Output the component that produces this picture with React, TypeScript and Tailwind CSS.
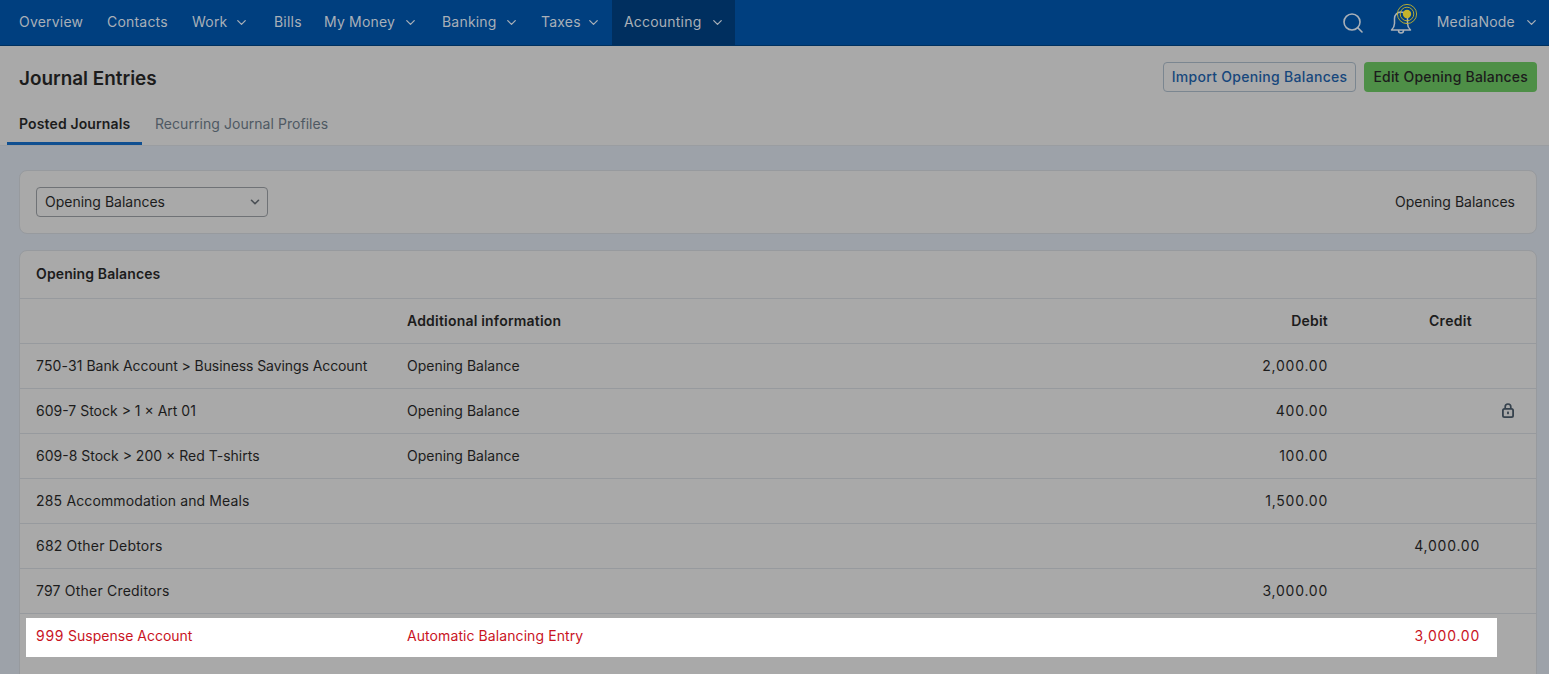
import { ChevronDown, Search } from "lucide-react";

const nav = [
  { t: "Overview", w: "w-[88px]" },
  { t: "Contacts", w: "w-[85px]" },
  { t: "Work", w: "w-[82px]", c: "mr-[13px]" },
  { t: "Bills", w: "w-[50px]" },
  { t: "My Money", w: "w-[118px]", c: "mr-[12px]" },
  { t: "Banking", w: "w-[99px]", c: "mr-[10px]" },
  { t: "Taxes", w: "w-[83px]", c: "mr-[11px]" },
  { t: "Accounting", w: "w-[123px]", c: "mr-[10px]", active: true },
];

const rows = [
  { code: "750-31", ct: "tracking-[0.15px]", a: " Bank Account > Business Savings Account", tr: "tracking-[-0.08px]", b: "Opening Balance", d: "2,000.00" },
  { code: "609-7", ct: "", a: " Stock > 1 × Art 01", tr: "", b: "Opening Balance", d: "400.00", lock: true },
  { code: "609-8", ct: "", a: " Stock > 200 × Red T-shirts", tr: "", b: "Opening Balance", d: "100.00" },
  { code: "285", ct: "tracking-[0.2px]", a: " Accommodation and Meals", tr: "tracking-[0.13px]", b: "", d: "1,500.00" },
  { code: "682", ct: "tracking-[0.2px]", a: " Other Debtors", tr: "tracking-[0.2px]", b: "", c: "4,000.00" },
  { code: "797", ct: "tracking-[0.2px]", a: " Other Creditors", tr: "tracking-[0.2px]", b: "", d: "3,000.00" },
];

const grid = "pl-[16px] pr-[21px] grid grid-cols-[371px_1fr_120px_152px_35px] items-center";

function Lock() {
  return (
    <svg width="12" height="15" viewBox="0 0 12 15" fill="none" className="mr-[1px] text-[#36424d]">
      <rect x="0.9" y="5.9" width="10.2" height="8.2" rx="1.6" stroke="currentColor" strokeWidth="1.8" />
      <path d="M3.2 5.6V3.8a2.8 2.8 0 0 1 5.6 0v1.8" stroke="currentColor" strokeWidth="1.7" />
      <rect x="5.1" y="8.6" width="1.8" height="2.6" fill="currentColor" />
    </svg>
  );
}

export default function App() {
  return (
    <div className="w-[1549px] h-[674px] overflow-hidden bg-[#9da2a9] font-['Inter','Liberation_Sans',sans-serif] text-[14px] text-[#1c1c1c]">
      <nav className="h-[46px] bg-[#003f7f] border-b border-[#00315f] flex items-stretch justify-between text-[#a9b0b8]">
        <div className="flex items-stretch pl-[7px]">
          {nav.map((n) => (
            <div key={n.t} className={`flex items-center pl-[12px] pb-[2px] ${n.w} ${n.active ? "bg-[#002f5f]" : ""}`}>
              <span className="tracking-[0.2px]">{n.t}</span>
              {n.c && <ChevronDown size={15} strokeWidth={2} className={`ml-auto mt-[2px] ${n.c}`} />}
            </div>
          ))}
        </div>
        <div className="flex items-center pr-[10px]">
          <Search size={24} strokeWidth={1.6} className="mr-[25px]" />
          <div className="relative mr-[25px] w-[22px] h-[24px] -mt-[2px]">
            <svg width="22" height="24" viewBox="0 0 22 24" fill="none" stroke="currentColor" strokeWidth="1.5" strokeLinejoin="round">
              <path d="M11 2a6.5 6.5 0 0 0-6.5 6.5v5c0 3-2 5.5-3 6.5h19c-1-1-3-3.5-3-6.5v-5A6.5 6.5 0 0 0 11 2z" />
              <path d="M8.5 20v.5a2.5 2.5 0 0 0 5 0V20" />
            </svg>
            <svg width="22" height="22" viewBox="0 0 22 22" className="absolute left-[6px] top-[-7px]" fill="none">
              <circle cx="11" cy="11" r="9.6" stroke="#c4b42c" strokeWidth="0.9" />
              <circle cx="11" cy="11" r="6.8" stroke="#c4b42c" strokeWidth="0.9" />
              <circle cx="11" cy="11" r="4.2" fill="#c4b42c" />
            </svg>
          </div>
          <span className="tracking-[0.22px] pb-[2px]">MediaNode</span>
          <ChevronDown size={15} strokeWidth={2} className="ml-[9px]" />
        </div>
      </nav>

      <header className="h-[100px] bg-[#a9a9a9] border-b border-[#9a9da1] flex flex-col">
        <div className="flex items-center justify-between h-[62px] pl-[19px] pr-[12px]">
          <h1 className="text-[18.9px] font-semibold pt-[5px]">Journal Entries</h1>
          <div className="flex gap-[8px]">
            <button className="h-[30px] px-[8px] rounded-[4px] border border-[#7b8690] font-medium tracking-[0.3px] text-[#17477c]">
              Import Opening Balances
            </button>
            <button className="h-[30px] px-[9px] rounded-[4px] bg-[#4e8f47] font-medium tracking-[0.2px] text-[#1c1c1c]">
              Edit Opening Balances
            </button>
          </div>
        </div>
        <div className="flex pl-[7px] flex-1">
          <div className="w-[135px] pl-[12px] flex items-center font-semibold tracking-[0.13px] border-b-[3px] border-[#0f4f91] h-[38px] pb-[3px]">
            Posted Journals
          </div>
          <div className="px-[13px] flex items-center text-[#4f5963] tracking-[0.05px] h-[38px] pb-[6px]">
            Recurring Journal Profiles
          </div>
        </div>
      </header>

      <main className="pr-[12px] pt-[24px] pl-[19px]">
        <section className="h-[64px] rounded-[8px] border border-[#979a9e] bg-[#a9a9a9] flex items-center justify-between pl-[16px] pr-[21px]">
          <div className="w-[232px] h-[30px] rounded-[4px] border border-[#6f7276] flex items-center justify-between pl-[8px] pr-[5px]">
            <span className="pb-[2px]">Opening Balances</span>
            <ChevronDown size={14} strokeWidth={2.8} className="text-[#4a4f55]" />
          </div>
          <span className="pb-[2px]">Opening Balances</span>
        </section>

        <section className="mt-[16px] rounded-[8px] border border-[#979a9e] bg-[#a9a9a9] h-[500px]">
          <div className="h-[47px] flex items-center pl-[16px] pb-[2px] font-semibold tracking-[0.12px]">Opening Balances</div>
          <div className={`h-[45px] border-t border-[#979a9e] pb-[2px] font-semibold ${grid}`}>
            <span />
            <span className="tracking-[0.2px]">Additional information</span>
            <span className="text-right tracking-[0.2px]">Debit</span>
            <span className="text-right pr-[8px] tracking-[0.3px]">Credit</span>
            <span />
          </div>
          {rows.map((r) => (
            <div key={r.code} className={`h-[45px] border-t border-[#979a9e] pb-[2px] ${grid}`}>
              <span className={r.tr}>
                <span className={r.ct}>{r.code}</span>
                {r.a}
              </span>
              <span>{r.b}</span>
              <span className="text-right tracking-[0.75px]">{r.d}</span>
              <span className="text-right tracking-[0.75px]">{r.c}</span>
              <span className="flex justify-end">{r.lock && <Lock />}</span>
            </div>
          ))}
          <div className={`relative h-[45px] border-t border-[#979a9e] pb-[2px] text-[#c9141f] ${grid}`}>
            <div className="absolute left-[6px] top-[4px] w-[1471px] h-[39px] bg-white" />
            <span className="relative">
              <span className="tracking-[0.7px]">999</span> Suspense Account
            </span>
            <span className="relative tracking-[0.08px]">Automatic Balancing Entry</span>
            <span />
            <span className="relative text-right tracking-[0.75px]">3,000.00</span>
            <span />
          </div>
        </section>
      </main>
    </div>
  );
}
